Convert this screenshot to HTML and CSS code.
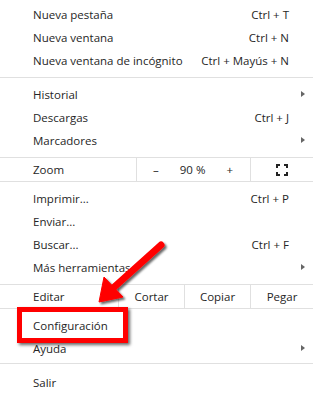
FILE: index.html
```html
<!DOCTYPE html>
<html lang="es">
<head>
    <meta charset="UTF-8">
    <title>Menú</title>
    <link rel="stylesheet" href="styles.css">
</head>
<body>
    <div class="menu">
        <div class="group first">
            <div class="item"><span>Nueva pestaña</span><span class="key">Ctrl + T</span></div>
            <div class="item"><span>Nueva ventana</span><span class="key">Ctrl + N</span></div>
            <div class="item"><span>Nueva ventana de incógnito</span><span class="key">Ctrl + Mayús + N</span></div>
        </div>
        <div class="group">
            <div class="item"><span>Historial</span><span class="sub"></span></div>
            <div class="item"><span>Descargas</span><span class="key">Ctrl + J</span></div>
            <div class="item"><span>Marcadores</span><span class="sub"></span></div>
        </div>
        <div class="row zoom">
            <div class="label">Zoom</div>
            <div class="cell ctrl"><span>–</span><span>90 %</span><span>+</span></div>
            <div class="cell full">
                <svg width="12" height="12" viewBox="0 0 12 12">
                    <path d="M1 4V1h3M8 1h3v3M11 8v3H8M4 11H1V8" fill="none" stroke="#222" stroke-width="2"/>
                </svg>
            </div>
        </div>
        <div class="group">
            <div class="item"><span>Imprimir...</span><span class="key">Ctrl + P</span></div>
            <div class="item"><span>Enviar...</span></div>
            <div class="item"><span>Buscar...</span><span class="key">Ctrl + F</span></div>
            <div class="item"><span>Más herramientas</span><span class="sub"></span></div>
        </div>
        <div class="row edit">
            <div class="label">Editar</div>
            <div class="cell">Cortar</div>
            <div class="cell">Copiar</div>
            <div class="cell">Pegar</div>
        </div>
        <div class="group short">
            <div class="item"><span>Configuración</span></div>
            <div class="item"><span>Ayuda</span><span class="sub"></span></div>
        </div>
        <div class="group last">
            <div class="item"><span>Salir</span></div>
        </div>
    </div>

    <!-- annotation -->
    <div class="mark"></div>
    <svg class="arrow" width="313" height="396" viewBox="0 0 313 396">
        <defs>
            <filter id="shade" x="-20%" y="-20%" width="140%" height="140%">
                <feDropShadow dx="2" dy="2" stdDeviation="1.2" flood-color="#000" flood-opacity="0.6"/>
            </filter>
        </defs>
        <g filter="url(#shade)" fill="#f00" stroke="#f00">
            <line x1="161" y1="245" x2="112" y2="289" stroke-width="7" stroke-linecap="round"/>
            <polygon points="99,302 104,277 123,297" stroke-width="1" stroke-linejoin="round"/>
        </g>
    </svg>
</body>
</html>
```

FILE: styles.css
```css
body {
    margin: 0;
    background: white;
    color: #262626;
    font-family: "Segoe UI", "Open Sans", sans-serif;
    font-size: 11.5px;
}
.menu {
    width: 313px;
}
.group {
    padding: 5px 0;
    border-bottom: 1px solid #e0e0e0;
}
.group.first {
    padding-top: 3px;
}
.group.short {
    padding: 5px 0 3px;
}
.group.last {
    padding-top: 7px;
    border-bottom: none;
}
.item {
    height: 23px;
    display: flex;
    align-items: center;
    justify-content: space-between;
    padding: 0 24px 0 33px;
    position: relative;
}
.sub {
    position: absolute;
    right: 8px;
    top: 8px;
    width: 0;
    height: 0;
    border-top: 3.5px solid transparent;
    border-bottom: 3.5px solid transparent;
    border-left: 4px solid #666;
}
.row {
    height: 23px;
    display: flex;
    border-bottom: 1px solid #e0e0e0;
}
.row .label {
    display: flex;
    align-items: center;
    padding-left: 33px;
}
.row .cell {
    display: flex;
    align-items: center;
    justify-content: center;
    border-left: 1px solid #e0e0e0;
}
.zoom .label {
    width: 103px;
}
.zoom .ctrl {
    width: 114px;
    justify-content: space-between;
    padding: 0 17px 0 16px;
    box-sizing: border-box;
}
.zoom .full {
    flex: 1;
}
.edit .label {
    width: 85px;
}
.edit .cell {
    width: 65px;
}
.edit .cell:last-child {
    flex: 1;
}
.mark {
    position: absolute;
    left: 17px;
    top: 307px;
    width: 101px;
    height: 26px;
    border: 5px solid #f00;
    box-shadow: 2px 2px 3px rgba(0, 0, 0, 0.6);
}
.arrow {
    position: absolute;
    left: 0;
    top: 0;
}
```
